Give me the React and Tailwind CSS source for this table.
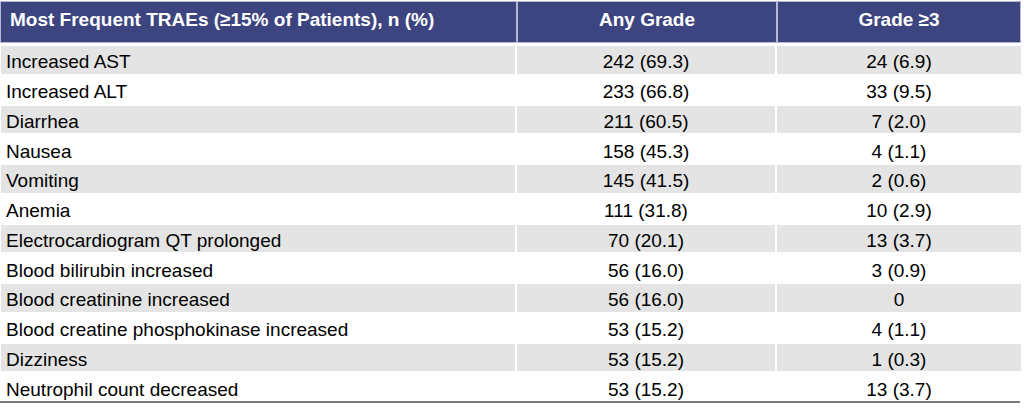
import React from "react";

const rows = [
  ["Increased AST", "242 (69.3)", "24 (6.9)"],
  ["Increased ALT", "233 (66.8)", "33 (9.5)"],
  ["Diarrhea", "211 (60.5)", "7 (2.0)"],
  ["Nausea", "158 (45.3)", "4 (1.1)"],
  ["Vomiting", "145 (41.5)", "2 (0.6)"],
  ["Anemia", "111 (31.8)", "10 (2.9)"],
  ["Electrocardiogram QT prolonged", "70 (20.1)", "13 (3.7)"],
  ["Blood bilirubin increased", "56 (16.0)", "3 (0.9)"],
  ["Blood creatinine increased", "56 (16.0)", "0"],
  ["Blood creatine phosphokinase increased", "53 (15.2)", "4 (1.1)"],
  ["Dizziness", "53 (15.2)", "1 (0.3)"],
  ["Neutrophil count decreased", "53 (15.2)", "13 (3.7)"],
];

export default function App() {
  return (
    <div
      className="w-[1024px] h-[413px] bg-white text-black"
      style={{ fontFamily: '"Liberation Sans", Arial, sans-serif' }}
    >
      <div className="w-[1021px] pt-[1px]">
        <div className="grid grid-cols-[515px_258px_1fr] gap-x-[2px] h-[42px] border border-[#b4b7cf] bg-[#b4b7cf]">
          <div className="bg-[#3d4580] text-white font-bold text-[19px] leading-none flex items-center pl-[9px] pb-[6px]">
            Most Frequent TRAEs (≥15% of Patients), n (%)
          </div>
          <div className="bg-[#3d4580] text-white font-bold text-[19px] leading-none flex items-center justify-center pb-[6px]">
            Any Grade
          </div>
          <div className="bg-[#3d4580] text-white font-bold text-[19px] leading-none flex items-center justify-center pb-[6px]">
            Grade ≥3
          </div>
        </div>
        <div className="flex flex-col gap-y-[2px] pt-[3px] pl-[1px]">
          {rows.map((r, i) => (
            <div
              key={i}
              className="grid grid-cols-[514px_258px_1fr] gap-x-[2px] h-[27.75px] text-[19px] leading-none"
            >
              <div className={`${i % 2 === 0 ? "bg-[#e4e4e4]" : "bg-white"} flex items-center pl-[5px] pt-[4px]`}>
                {r[0]}
              </div>
              <div className={`${i % 2 === 0 ? "bg-[#e4e4e4]" : "bg-white"} flex items-center justify-center pt-[4px]`}>
                {r[1]}
              </div>
              <div className={`${i % 2 === 0 ? "bg-[#e4e4e4]" : "bg-white"} flex items-center justify-center pt-[4px]`}>
                {r[2]}
              </div>
            </div>
          ))}
        </div>
        <div className="h-[2px] bg-[#7a7a7a] w-[1020px]"></div>
      </div>
    </div>
  );
}
